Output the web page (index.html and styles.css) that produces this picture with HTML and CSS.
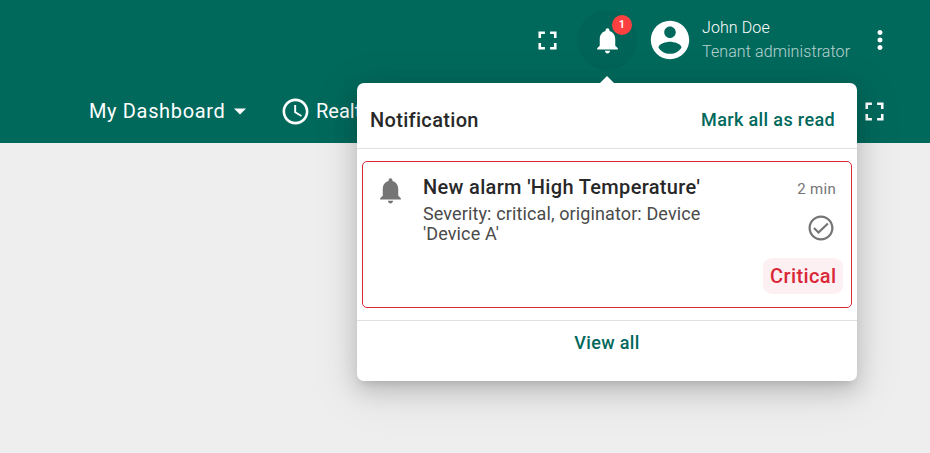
FILE: index.html
```html
<!DOCTYPE html>
<html lang="en">
<head>
<meta charset="utf-8">
<title>Dashboard</title>
<link rel="stylesheet" href="styles.css">
</head>
<body>
<header class="header">
  <div class="topbar">
    <svg class="icon" viewBox="0 0 24 24"><path d="M7 14H5v5h5v-2H7v-3zm-2-4h2V7h3V5H5v5zm12 7h-3v2h5v-5h-2v3zM14 5v2h3v3h2V5h-5z"/></svg>
    <div class="bell">
      <svg class="icon" viewBox="0 0 24 24"><path d="M12 22c1.1 0 2-.9 2-2h-4c0 1.1.89 2 2 2zm6-6v-5c0-3.07-1.64-5.64-4.5-6.32V4c0-.83-.67-1.5-1.5-1.5s-1.5.67-1.5 1.5v.68C7.63 5.36 6 7.92 6 11v5l-2 2v1h16v-1l-2-2z"/></svg>
      <span class="badge">1</span>
      <section class="popover">
        <div class="popover-head">
          <h2 class="title">Notification</h2>
          <a class="link">Mark all as read</a>
        </div>
        <div class="list">
          <article class="alarm">
            <svg class="icon alarm-icon" viewBox="0 0 24 24"><path d="M12 22c1.1 0 2-.9 2-2h-4c0 1.1.89 2 2 2zm6-6v-5c0-3.07-1.64-5.64-4.5-6.32V4c0-.83-.67-1.5-1.5-1.5s-1.5.67-1.5 1.5v.68C7.63 5.36 6 7.92 6 11v5l-2 2v1h16v-1l-2-2z"/></svg>
            <div class="alarm-body">
              <h3 class="alarm-title">New alarm 'High Temperature'</h3>
              <p class="alarm-text">Severity: critical, originator: Device 'Device A'</p>
            </div>
            <div class="alarm-side">
              <span class="time">2 min</span>
              <svg class="icon check" viewBox="0 0 24 24"><path d="M12 2C6.48 2 2 6.48 2 12s4.48 10 10 10 10-4.48 10-10S17.52 2 12 2zm0 18.2c-4.52 0-8.2-3.68-8.2-8.2S7.48 3.8 12 3.8s8.2 3.68 8.2 8.2-3.68 8.2-8.2 8.2zm4.9-12.5L10 14.3l-3-3-1.2 1.2 4.2 4.2 8.1-7.8z"/></svg>
              <span class="severity">Critical</span>
            </div>
          </article>
        </div>
        <div class="popover-foot"><a class="link">View all</a></div>
      </section>
    </div>
    <svg class="icon avatar" viewBox="0 0 24 24"><path d="M12 2C6.48 2 2 6.48 2 12s4.48 10 10 10 10-4.48 10-10S17.52 2 12 2zm0 3c1.66 0 3 1.34 3 3s-1.34 3-3 3-3-1.34-3-3 1.34-3 3-3zm0 14.2c-2.5 0-4.71-1.28-6-3.22.03-1.99 4-3.08 6-3.08 1.99 0 5.97 1.09 6 3.08-1.29 1.94-3.5 3.22-6 3.22z"/></svg>
    <div class="user">
      <span class="user-name">John Doe</span>
      <span class="user-role">Tenant administrator</span>
    </div>
    <svg class="icon more" viewBox="0 0 24 24"><path d="M12 8c1.1 0 2-.9 2-2s-.9-2-2-2-2 .9-2 2 .9 2 2 2zm0 2c-1.1 0-2 .9-2 2s.9 2 2 2 2-.9 2-2-.9-2-2-2zm0 6c-1.1 0-2 .9-2 2s.9 2 2 2 2-.9 2-2-.9-2-2-2z"/></svg>
  </div>
  <div class="toolbar">
    <span class="dash-name">My Dashboard</span>
    <svg class="arrow" viewBox="0 0 12 6"><path d="M0 0h12L6 6z"/></svg>
    <svg class="icon clock" viewBox="0 0 24 24"><path d="M11.99 2C6.47 2 2 6.48 2 12s4.47 10 9.99 10C17.52 22 22 17.52 22 12S17.52 2 11.99 2zM12 20c-4.42 0-8-3.58-8-8s3.58-8 8-8 8 3.58 8 8-3.58 8-8 8zm.5-13H11v6l5.25 3.15.75-1.23-4.5-2.67z"/></svg>
    <span class="window">Realt</span>
    <svg class="icon expand" viewBox="0 0 24 24"><path d="M7 14H5v5h5v-2H7v-3zm-2-4h2V7h3V5H5v5zm12 7h-3v2h5v-5h-2v3zM14 5v2h3v3h2V5h-5z"/></svg>
  </div>
</header>
</body>
</html>
```

FILE: styles.css
```css
* { box-sizing: border-box; margin: 0; }
body {
  height: 453px;
  overflow: hidden;
  background: #eee;
  font-family: Roboto, sans-serif;
}
.header {
  height: 143px;
  background: #00695c;
  color: #fff;
}
.icon {
  display: block;
  flex: none;
  width: 31px;
  height: 31px;
  fill: currentColor;
}
.topbar {
  display: flex;
  align-items: center;
  justify-content: flex-end;
  height: 80px;
  padding-right: 35px;
}
.bell {
  position: relative;
  display: flex;
  align-items: center;
  justify-content: center;
  width: 60px;
  height: 60px;
  margin: 0 14px;
  border-radius: 50%;
  background: #006458;
}
.badge {
  position: absolute;
  top: 5px;
  left: 35px;
  width: 20px;
  height: 20px;
  border-radius: 50%;
  background: #ff4040;
  font-size: 11px;
  font-weight: 600;
  line-height: 19px;
  text-align: center;
}
.avatar { width: 46px; height: 46px; margin-left: -4px; }
.user {
  display: flex;
  flex-direction: column;
  width: 163px;
  margin-left: 9px;
  font-size: 16px;
  font-weight: 300;
  line-height: 24px;
  letter-spacing: .1px;
}
.user-role { opacity: .7; }
.more { width: 30px; height: 30px; }
.toolbar {
  display: flex;
  align-items: center;
  height: 62px;
  padding: 0 40px 0 89px;
  font-size: 20px;
  letter-spacing: .65px;
}
.dash-name { width: 145px; }
.arrow { width: 12px; height: 7px; fill: currentColor; }
.clock { margin: 0 5px 0 34px; }
.window { letter-spacing: 0; }
.expand { margin-left: auto; }

.popover {
  position: absolute;
  z-index: 1;
  top: 73px;
  left: -220px;
  width: 500px;
  height: 298px;
  border-radius: 7px;
  background: #fff;
  box-shadow: 0 6px 7px -4px rgba(0, 0, 0, .1), 0 8px 22px 1px rgba(0, 0, 0, .16), 0 10px 44px 8px rgba(0, 0, 0, .08);
  color: #282828;
}
.popover::before {
  content: "";
  position: absolute;
  top: -7px;
  left: 243px;
  border: solid transparent;
  border-width: 0 7px 7px;
  border-bottom-color: #fff;
}
.popover-head {
  display: flex;
  align-items: center;
  justify-content: space-between;
  height: 66px;
  padding: 8px 22px 0 13px;
  border-bottom: 1px solid #e0e0e0;
}
.title { font-size: 20px; font-weight: 500; letter-spacing: .32px; }
.link {
  color: #00695c;
  font-size: 18px;
  font-weight: 500;
  letter-spacing: .36px;
}
.list { padding: 12px 5px; }
.alarm {
  display: flex;
  height: 147px;
  padding: 13px 8px 0 12px;
  border: 1px solid #d92838;
  border-radius: 5px;
}
.alarm-icon { color: #757575; }
.alarm-body { flex: none; width: 300px; margin-left: 17px; }
.alarm-title {
  font-size: 20px;
  font-weight: 500;
  line-height: 24px;
  letter-spacing: .33px;
}
.alarm-text {
  margin-top: 5px;
  color: #4a4a4a;
  font-size: 18px;
  line-height: 20px;
  letter-spacing: .12px;
}
.alarm-side {
  display: flex;
  flex: 1;
  flex-direction: column;
  align-items: flex-end;
  color: #757575;
}
.time { margin-right: 7px; font-size: 15px; line-height: 28px; letter-spacing: .3px; }
.check { width: 30px; height: 30px; margin: 10px 7px 0 0; }
.severity {
  margin-top: 15px;
  padding: 0 6.5px;
  border-radius: 9px;
  background: #fdf0f2;
  color: #d92838;
  font-size: 20px;
  font-weight: 500;
  line-height: 36px;
  letter-spacing: .4px;
}
.popover-foot {
  padding-top: 11px;
  border-top: 1px solid #e0e0e0;
  text-align: center;
}
```
